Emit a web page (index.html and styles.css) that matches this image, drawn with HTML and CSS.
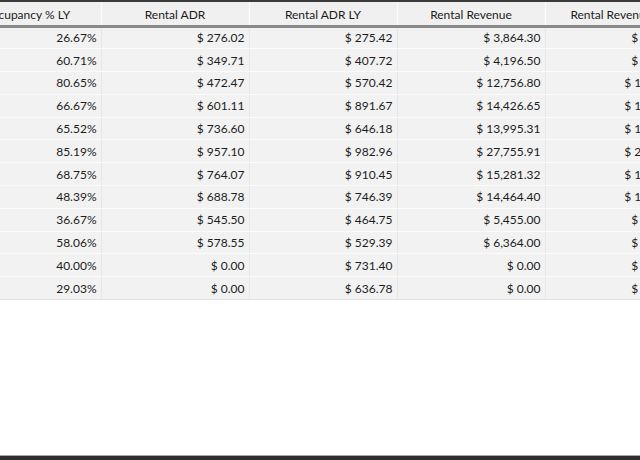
FILE: index.html
```html
<!DOCTYPE html>
<html>
<head>
<meta charset="utf-8">
<link rel="stylesheet" href="styles.css">
</head>
<body>
<div class="frame">
  <div class="topbar"></div>
  <table class="grid">
    <colgroup><col><col><col><col><col></colgroup>
    <thead>
      <tr><th>Occupancy % LY</th><th>Rental ADR</th><th>Rental ADR LY</th><th>Rental Revenue</th><th>Rental Revenue LY</th></tr>
    </thead>
    <tbody>
      <tr><td>26.67%</td><td>$ 276.02</td><td>$ 275.42</td><td>$ 3,864.30</td><td>$ 1,234.56</td></tr>
      <tr><td>60.71%</td><td>$ 349.71</td><td>$ 407.72</td><td>$ 4,196.50</td><td>$ 4,892.60</td></tr>
      <tr><td>80.65%</td><td>$ 472.47</td><td>$ 570.42</td><td>$ 12,756.80</td><td>$ 14,261.55</td></tr>
      <tr><td>66.67%</td><td>$ 601.11</td><td>$ 891.67</td><td>$ 14,426.65</td><td>$ 16,050.00</td></tr>
      <tr><td>65.52%</td><td>$ 736.60</td><td>$ 646.18</td><td>$ 13,995.31</td><td>$ 12,277.36</td></tr>
      <tr><td>85.19%</td><td>$ 957.10</td><td>$ 982.96</td><td>$ 27,755.91</td><td>$ 22,608.17</td></tr>
      <tr><td>68.75%</td><td>$ 764.07</td><td>$ 910.45</td><td>$ 15,281.32</td><td>$ 10,014.96</td></tr>
      <tr><td>48.39%</td><td>$ 688.78</td><td>$ 746.39</td><td>$ 14,464.40</td><td>$ 11,195.82</td></tr>
      <tr><td>36.67%</td><td>$ 545.50</td><td>$ 464.75</td><td>$ 5,455.00</td><td>$ 5,112.25</td></tr>
      <tr><td>58.06%</td><td>$ 578.55</td><td>$ 529.39</td><td>$ 6,364.00</td><td>$ 9,528.99</td></tr>
      <tr><td>40.00%</td><td>$ 0.00</td><td>$ 731.40</td><td>$ 0.00</td><td>$ 8,776.80</td></tr>
      <tr><td>29.03%</td><td>$ 0.00</td><td>$ 636.78</td><td>$ 0.00</td><td>$ 5,730.99</td></tr>
    </tbody>
  </table>
  <div class="bottombar"></div>
</div>
</body>
</html>
```

FILE: styles.css
```css
html, body {
  margin: 0;
  padding: 0;
  background: #ffffff;
  overflow: hidden;
}

.frame {
  width: 640px;
  height: 460px;
  display: flex;
  flex-direction: column;
  overflow: hidden;
  font-family: Lato, "Noto Sans", sans-serif;
  font-size: 12px;
  color: #1c1c1c;
}

.topbar {
  height: 2px;
  background: #3a3a3a;
  flex: none;
}

.grid {
  flex: none;
  margin-left: -47px;
  width: 740px;
  table-layout: fixed;
  border-collapse: collapse;
}

.grid col {
  width: 148px;
}

.grid th {
  height: 24px;
  padding: 2px 0 0 0;
  font-weight: normal;
  text-align: center;
  white-space: nowrap;
  background: #f0f0f0;
  border-right: 1px solid #fbfbfb;
  border-bottom: 3px solid #8a8a8a;
  box-sizing: border-box;
  line-height: 19px;
}

.grid td {
  height: 22.8px;
  box-sizing: border-box;
  padding: 0 4px 0 0;
  text-align: right;
  white-space: nowrap;
  background: #f2f2f2;
  border-right: 1px solid #e6e6e6;
  border-bottom: 1px solid #fafafa;
}

.grid tbody tr:last-child td {
  border-bottom: 1px solid #e2e2e2;
}

.bottombar {
  margin-top: auto;
  height: 4px;
  flex: none;
  border-top: 1px solid #a8a8a8;
  background: #2e2e2e;
}
```
